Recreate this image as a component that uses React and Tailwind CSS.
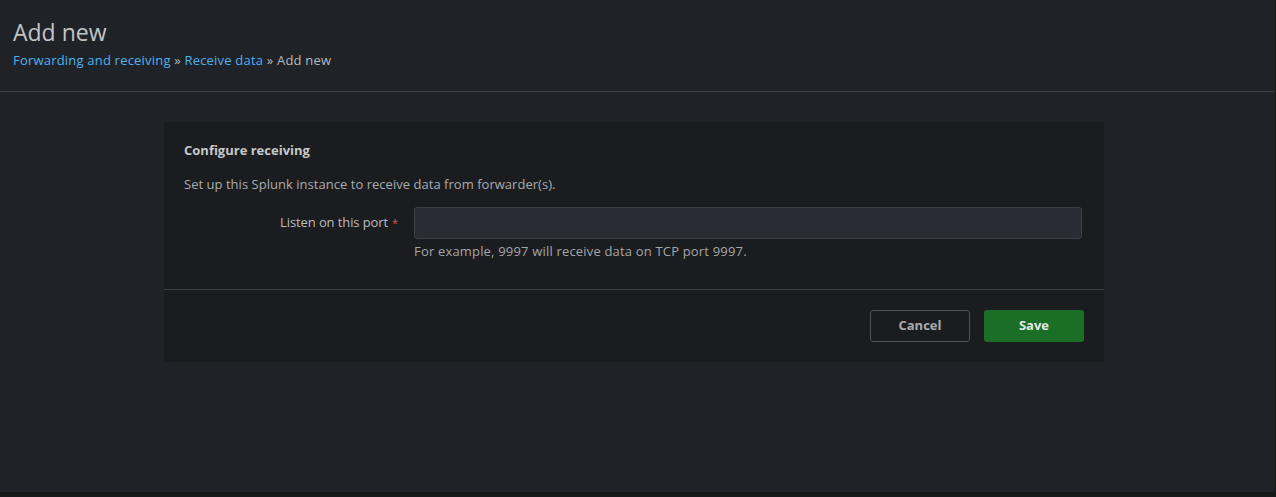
import React from 'react';

const App = () => {
    return (
        <div className="w-[1276px] h-[497px] bg-[#1f2327] flex flex-col overflow-hidden" style={{ fontFamily: '"Open Sans", Lato, sans-serif' }}>
            <div className="flex-1 flex">
                <div className="flex-1 flex flex-col">
                    {/* page header */}
                    <div className="h-[92px] px-[13px] pt-[17px] border-b border-[#3c4146]">
                        <h1 className="text-[23px] leading-[30px] text-[#c3c5c7] font-medium">Add new</h1>
                        <div className="mt-[4px] text-[13px] leading-[18px] text-[#b5b8bb] tracking-[0.2px]">
                            <a className="text-[#4fb1f0]">Forwarding and receiving</a>
                            <span> » </span>
                            <a className="text-[#4fb1f0]">Receive data</a>
                            <span> » Add new</span>
                        </div>
                    </div>

                    {/* form card */}
                    <div className="mt-[30px] ml-[164px] w-[940px] bg-[#1b1c1f]">
                        <div className="px-[20px] pt-[20px] pb-[30px] border-b border-[#3c3e42]">
                            <h2 className="text-[13px] leading-[16px] font-bold text-[#c6c8ca]">Configure receiving</h2>
                            <p className="mt-[18px] text-[13px] leading-[16px] text-[#a9acaf] tracking-[0.03px]">
                                Set up this Splunk instance to receive data from forwarder(s).
                            </p>
                            <div className="mt-[15px] flex">
                                <label className="w-[230px] pr-[16px] h-[32px] flex items-center justify-end text-[13px] text-[#b9bcbf] tracking-[-0.1px]">
                                    Listen on this port<span className="ml-[4px] text-[#d1585a] text-[11px]">*</span>
                                </label>
                                <div className="flex flex-col">
                                    <input className="w-[668px] h-[32px] bg-[#2a2b33] border border-[#3d3f47] rounded-[3px] px-2 outline-none text-[13px] text-[#c3c5c7]" />
                                    <span className="mt-[4px] text-[13px] leading-[16px] text-[#a3a6a9] tracking-[0.18px]">
                                        For example, 9997 will receive data on TCP port 9997.
                                    </span>
                                </div>
                            </div>
                        </div>
                        <div className="h-[72px] flex items-center justify-end gap-[14px] pr-[20px]">
                            <button className="w-[100px] h-[32px] rounded-[3px] border border-[#4d5055] text-[13px] font-bold text-[#a9acaf]">
                                Cancel
                            </button>
                            <button className="w-[100px] h-[32px] rounded-[3px] bg-[#1a6e26] text-[13px] font-bold text-[#e4e8e4]">
                                Save
                            </button>
                        </div>
                    </div>
                </div>
                <div className="w-[1px] bg-[#17181a]" />
            </div>
            <div className="h-[5px] bg-[#17181a]" />
        </div>
    );
};

export default App;
